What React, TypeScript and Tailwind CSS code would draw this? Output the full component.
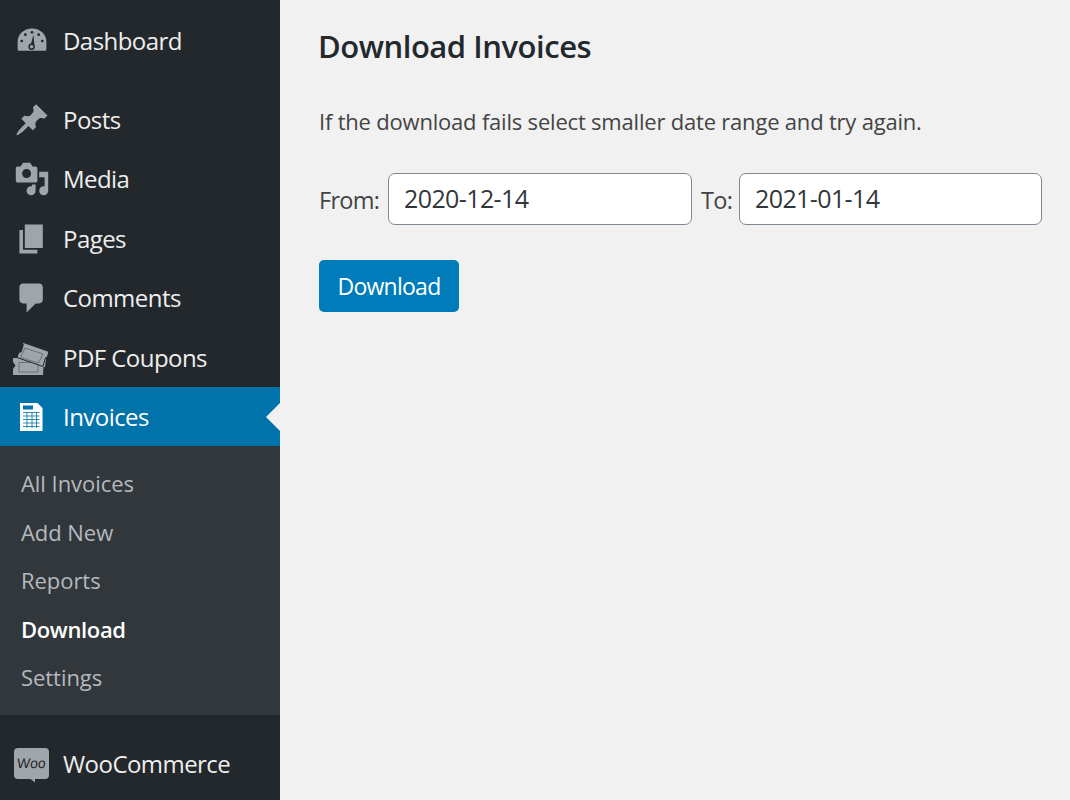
const font = "font-['Open_Sans',sans-serif]";

function Icon({ d }: { d: string }) {
  return (
    <svg viewBox="0 0 20 20" className="h-9 w-9 shrink-0 fill-[#a0a5aa]">
      <path d={d} />
    </svg>
  );
}

function DashboardIcon() {
  return (
    <svg viewBox="0 0 20 20" className="h-9 w-9 shrink-0">
      <path
        fill="#a0a5aa"
        d="M2.200 15.400h15.600c.2-.8.2-3.800.2-5 0-4.200-3.600-7.400-8-7.400S2 6.200 2 10.400c0 1.200 0 4.200.2 5z"
      />
      <circle cx="10" cy="5.200" r=".75" fill="#23282d" />
      <circle cx="6.300" cy="6.500" r=".75" fill="#23282d" />
      <circle cx="13.700" cy="6.500" r=".75" fill="#23282d" />
      <circle cx="4.300" cy="10" r=".75" fill="#23282d" />
      <circle cx="15.700" cy="10" r=".75" fill="#23282d" />
      <circle cx="9.800" cy="13.200" r="1.400" fill="none" stroke="#23282d" strokeWidth=".8" />
      <path d="M9.300 12l1.500-5.400.5 5.800z" fill="#23282d" />
    </svg>
  );
}

function CouponIcon() {
  return (
    <svg viewBox="0 0 36 36" className="h-9 w-9 shrink-0 overflow-visible">
      <path
        fill="#a0a5aa"
        d="M-1 18h33l-1 9h-1.500L29 35H-1v-6l2.500-3.500L-1 22z"
      />
      <path fill="none" stroke="#6b7075" strokeWidth="1" d="M5 22.500h19v9.500H5z" />
      <path
        fill="#a0a5aa"
        stroke="#23282d"
        strokeWidth="1"
        d="M8 2l27 9.500-1.500 5-2.300 1.800-2.200 8.200-26-9 1.700-4.800 2.600-1.200 2-6.500-1.300-3z"
      />
      <path fill="none" stroke="#6b7075" strokeWidth="1" d="M11 8l18 6-4.500 9-18-5.500z" />
    </svg>
  );
}

function InvoiceIcon() {
  return (
    <svg viewBox="0 0 36 36" className="h-9 w-9 shrink-0">
      <path fill="#fff" d="M6 4h17.500l5 5v23H6z" />
      <path fill="#0073aa" d="M9 6.500h10v4H9z" />
      <path
        fill="none"
        stroke="#0073aa"
        strokeWidth=".8"
        d="M9 13.500h16.500M9 17h16.500M9 20.500h16.500M9 24h16.500M9 27.500h16.500M13 13v16M18 13v16M22.500 13v16"
      />
    </svg>
  );
}

function WooIcon() {
  return (
    <div className="relative flex h-[31px] w-[35px] shrink-0 -translate-y-[1px] items-center justify-center rounded-[4px] bg-[#a0a5aa] font-['Liberation_Sans',sans-serif] text-[14px] leading-none tracking-[0.2px] text-[#23282d]">
      <span className="-skew-x-6">Woo</span>
      <svg viewBox="0 0 6 5" className="absolute bottom-[-4px] right-[14px] h-[5px] w-[5px] fill-[#a0a5aa]">
        <path d="M0 0h6v5z" />
      </svg>
    </div>
  );
}

function MenuRow({
  icon,
  label,
  active,
  gap = "gap-[13px]",
}: {
  icon: React.ReactNode;
  label: string;
  active?: boolean;
  gap?: string;
}) {
  return (
    <div
      className={`relative flex items-center pl-[14px] text-[24px] tracking-[-0.55px] ${gap} ${
        active ? "h-[59px] bg-[#0073aa] text-white" : "h-[59.5px] text-[#eeeeee]"
      }`}
    >
      {icon}
      <span>{label}</span>
      {active && (
        <span className="absolute right-0 top-1/2 -translate-y-1/2 border-y-[14px] border-r-[14px] border-y-transparent border-r-[#f1f1f1]" />
      )}
    </div>
  );
}

const subItems = ["All Invoices", "Add New", "Reports", "Download", "Settings"];

function DateInput({ value, width }: { value: string; width: string }) {
  return (
    <input
      readOnly
      value={value}
      className={`h-[52px] rounded-[7px] border border-[#7e8993] bg-white px-[15px] pb-[2px] text-[25px] tracking-[-0.6px] text-[#32373c] outline-none ${width}`}
    />
  );
}

export default function App() {
  return (
    <div className={`flex h-[800px] w-[1070px] overflow-hidden bg-[#f1f1f1] ${font}`}>
      {/* Admin sidebar */}
      <aside className="w-[280px] shrink-0 bg-[#23282d] pt-[11px]">
        <MenuRow icon={<DashboardIcon />} label="Dashboard" />
        <div className="h-[19.25px]" />
        <MenuRow
          label="Posts"
          icon={
            <Icon d="M10.440 3.020l1.820-1.820 6.360 6.350-1.830 1.820c-1.050-.68-2.480-.57-3.410.36l-.75.75c-.92.93-1.040 2.350-.35 3.410l-1.830 1.820-2.410-2.410-2.800 2.790c-.42.42-3.380 2.710-3.800 2.290s1.860-3.390 2.280-3.810l2.790-2.790L4.100 9.360l1.830-1.820c1.050.69 2.480.57 3.400-.36l.75-.75c.93-.92 1.050-2.350.36-3.410z" />
          }
        />
        <MenuRow
          label="Media"
          icon={
            <Icon d="M13 11V4c0-.55-.45-1-1-1h-1.670L9 1H5L3.670 3H2c-.55 0-1 .45-1 1v7c0 .55.45 1 1 1h10c.55 0 1-.45 1-1zM7 4.500c1.380 0 2.500 1.120 2.500 2.500S8.380 9.500 7 9.500 4.500 8.380 4.500 7 5.620 4.500 7 4.500zM14 6h5v10.500c0 1.380-1.120 2.500-2.500 2.500S14 17.880 14 16.500s1.120-2.500 2.500-2.500c.17 0 .34.020.5.050V9h-3V6zm-4 8.050V13h2v3.500c0 1.380-1.120 2.500-2.500 2.500S7 17.880 7 16.500 8.120 14 9.500 14c.17 0 .34.020.5.050z" />
          }
        />
        <MenuRow label="Pages" icon={<Icon d="M6 15V2h10v13H6zm-1 1h8v2H3V5h2v11z" />} />
        <MenuRow
          label="Comments"
          icon={
            <Icon d="M5 2h9c1.100 0 2 .9 2 2v7c0 1.100-.9 2-2 2h-2l-5 5v-5H5c-1.100 0-2-.9-2-2V4c0-1.100.9-2 2-2z" />
          }
        />
        <MenuRow label="PDF Coupons" icon={<CouponIcon />} />
        <MenuRow label="Invoices" icon={<InvoiceIcon />} active />

        {/* Submenu */}
        <div className="h-[268.75px] bg-[#32373c] pl-[21px] pt-[13.25px] text-[22px] tracking-[-0.05px]">
          {subItems.map((item) => (
            <div
              key={item}
              className={`flex h-[48.5px] items-center ${
                item === "Download" ? "font-semibold tracking-[-0.35px] text-white" : "text-[#b4b9be]"
              }`}
            >
              {item}
            </div>
          ))}
        </div>

        <div className="h-[19.5px]" />
        <MenuRow label="WooCommerce" icon={<WooIcon />} gap="gap-[14px]" />
      </aside>

      {/* Page content */}
      <main className="flex-1 pl-[39px] pr-[28px] pt-[26px]">
        <h1 className="-ml-[1px] text-[31px] font-semibold leading-[40px] tracking-[-0.47px] text-[#23282d]">
          Download Invoices
        </h1>
        <p className="mt-[38px] text-[22px] leading-[34px] tracking-[-0.2px] text-[#444444]">
          If the download fails select smaller date range and try again.
        </p>
        <div className="mt-[35px] flex items-center text-[23.5px] tracking-[-0.7px] text-[#444444]">
          <span className="mr-[8px] w-[61px] pt-[3px]">From:</span>
          <DateInput value="2020-12-14" width="w-[304px]" />
          <span className="ml-[9px] mr-[8px] w-[30px] pt-[3px]">To:</span>
          <DateInput value="2021-01-14" width="w-[303px]" />
        </div>
        <button className="mt-[35px] flex h-[52px] w-[140px] items-center justify-center rounded-[5px] bg-[#007cba] text-[23px] tracking-[-0.75px] text-white">
          Download
        </button>
      </main>
    </div>
  );
}
